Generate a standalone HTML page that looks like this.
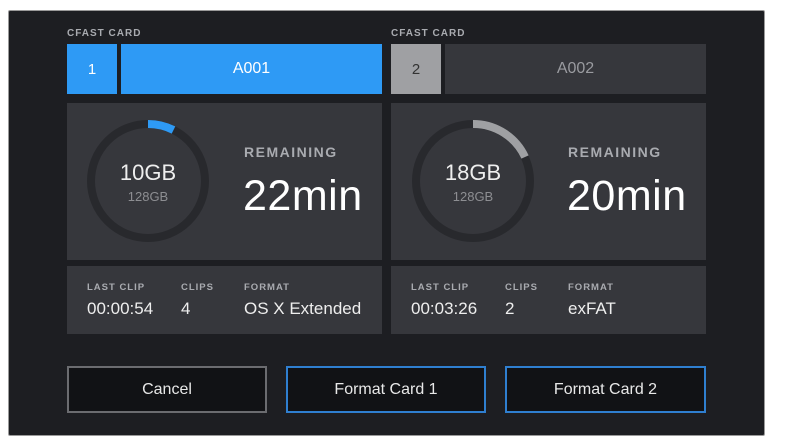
<!DOCTYPE html><html><head><style>
body{margin:0;width:786px;height:443px;background:#fff;position:relative;overflow:hidden;font-family:"Liberation Sans",sans-serif;}
.scr{position:absolute;left:8px;top:10px;width:755px;height:424px;background:#1d1e22;border:1px solid #9a9a9a;border-radius:2px;}
.a{position:absolute;}
.lbl{color:#a9abb0;font-size:10px;font-weight:bold;letter-spacing:1px;}
.p{background:#36373c;}
.c{display:flex;align-items:center;justify-content:center;}
.btn{border:2px solid #2f7fd0;background:#111215;color:#e8e8e8;font-size:16px;box-sizing:border-box;}
</style></head><body>
<div class="scr"></div>
<div class="a lbl" style="left:67px;top:28px">CFAST CARD</div>
<div class="a lbl" style="left:391px;top:28px">CFAST CARD</div>
<div class="a c" style="left:67px;top:44px;width:50px;height:50px;background:#2e9af5;color:#fff;font-size:15px">1</div>
<div class="a c" style="left:121px;top:44px;width:261px;height:50px;background:#2e9af5;color:#fff;font-size:16px">A001</div>
<div class="a c" style="left:391px;top:44px;width:50px;height:50px;background:#9fa0a3;color:#333;font-size:15px">2</div>
<div class="a c" style="left:445px;top:44px;width:261px;height:50px;background:#36373c;color:#9a9ba0;font-size:16px">A002</div>
<div class="a p" style="left:67px;top:103px;width:315px;height:157px"></div>
<div class="a p" style="left:391px;top:103px;width:315px;height:157px"></div>
<div class="a p" style="left:67px;top:266px;width:315px;height:68px"></div>
<div class="a p" style="left:391px;top:266px;width:315px;height:68px"></div>
<svg class="a" style="left:0;top:0" width="786" height="443">
<circle cx="148" cy="181" r="57" fill="none" stroke="#28292d" stroke-width="8"/>
<path d="M148 124 A57 57 0 0 1 173.5 130" fill="none" stroke="#2e9af5" stroke-width="8"/>
<circle cx="473" cy="181" r="57" fill="none" stroke="#28292d" stroke-width="8"/>
<path d="M473 124 A57 57 0 0 1 525 157" fill="none" stroke="#9fa0a3" stroke-width="8"/>
</svg>
<div class="a" style="left:98px;top:160px;width:100px;text-align:center;color:#eee;font-size:22px">10GB</div>
<div class="a" style="left:98px;top:189px;width:100px;text-align:center;color:#8d8e92;font-size:13px">128GB</div>
<div class="a" style="left:423px;top:160px;width:100px;text-align:center;color:#eee;font-size:22px">18GB</div>
<div class="a" style="left:423px;top:189px;width:100px;text-align:center;color:#8d8e92;font-size:13px">128GB</div>
<div class="a lbl" style="left:244px;top:144px;font-size:14px;letter-spacing:1.5px">REMAINING</div>
<div class="a lbl" style="left:568px;top:144px;font-size:14px;letter-spacing:1.5px">REMAINING</div>
<div class="a" style="left:243px;top:172px;color:#fff;font-size:43px;letter-spacing:0.5px">22min</div>
<div class="a" style="left:567px;top:172px;color:#fff;font-size:43px;letter-spacing:0.5px">20min</div>
<div class="a lbl" style="left:87px;top:282px;font-size:9.5px">LAST CLIP</div>
<div class="a lbl" style="left:181px;top:282px;font-size:9.5px">CLIPS</div>
<div class="a lbl" style="left:244px;top:282px;font-size:9.5px">FORMAT</div>
<div class="a" style="left:87px;top:299px;color:#eee;font-size:17px">00:00:54</div>
<div class="a" style="left:181px;top:299px;color:#eee;font-size:17px">4</div>
<div class="a" style="left:244px;top:299px;color:#eee;font-size:17px">OS X&nbsp;Extended</div>
<div class="a lbl" style="left:411px;top:282px;font-size:9.5px">LAST CLIP</div>
<div class="a lbl" style="left:505px;top:282px;font-size:9.5px">CLIPS</div>
<div class="a lbl" style="left:568px;top:282px;font-size:9.5px">FORMAT</div>
<div class="a" style="left:411px;top:299px;color:#eee;font-size:17px">00:03:26</div>
<div class="a" style="left:505px;top:299px;color:#eee;font-size:17px">2</div>
<div class="a" style="left:568px;top:299px;color:#eee;font-size:17px">exFAT</div>
<div class="a c btn" style="left:67px;top:366px;width:200px;height:47px;border-color:#6b6c70">Cancel</div>
<div class="a c btn" style="left:286px;top:366px;width:200px;height:47px">Format Card 1</div>
<div class="a c btn" style="left:505px;top:366px;width:201px;height:47px">Format Card 2</div>
</body></html>
